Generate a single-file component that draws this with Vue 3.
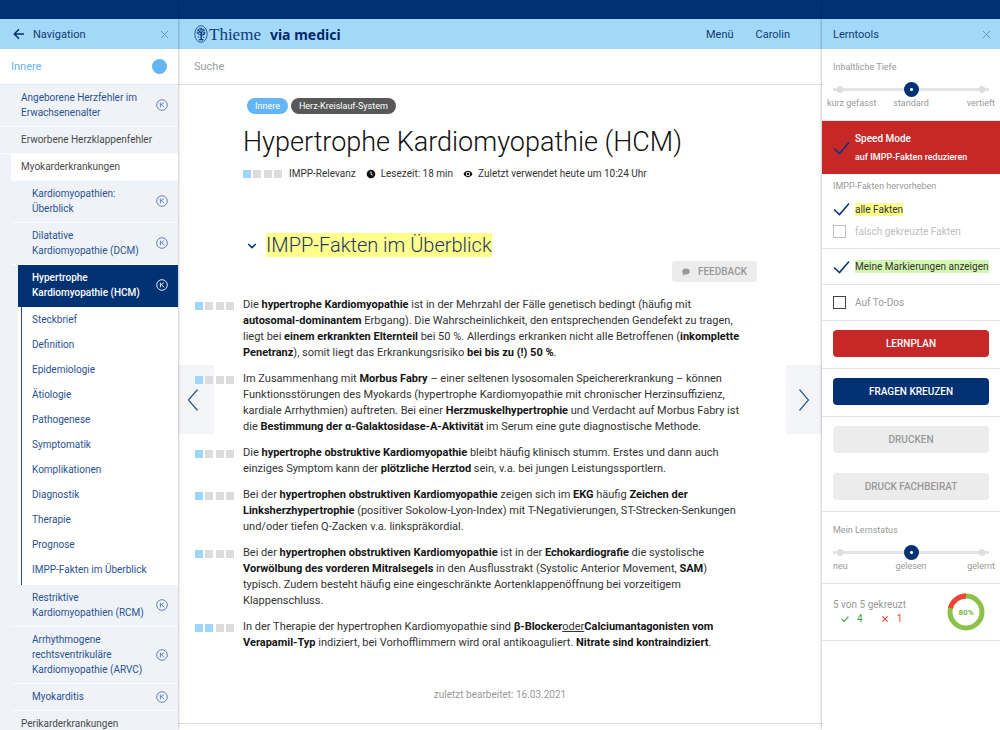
<script setup>
import { ref } from 'vue'

const before = [
  { lines: ['Angeborene Herzfehler im', 'Erwachsenenalter'], k: true },
  { lines: ['Erworbene Herzklappenfehler'], group: true },
]
const myocardTop = [
  ['Kardiomyopathien:', 'Überblick'],
  ['Dilatative', 'Kardiomyopathie (DCM)'],
]
const sections = [
  'Steckbrief', 'Definition', 'Epidemiologie', 'Ätiologie', 'Pathogenese', 'Symptomatik',
  'Komplikationen', 'Diagnostik', 'Therapie', 'Prognose', 'IMPP-Fakten im Überblick',
]
const myocardBottom = [
  ['Restriktive', 'Kardiomyopathien (RCM)'],
  ['Arrhythmogene', 'rechtsventrikuläre', 'Kardiomyopathie (ARVC)'],
  ['Myokarditis'],
]

// Each fact is a list of runs: b = bold, u = underlined link, br = line end.
const facts = [
  { level: 1, runs: [
    { t: 'Die ' }, { t: 'hypertrophe Kardiomyopathie', b: 1 }, { t: ' ist in der Mehrzahl der Fälle genetisch bedingt (häufig mit', br: 1 },
    { t: 'autosomal-dominantem', b: 1 }, { t: ' Erbgang). Die Wahrscheinlichkeit, den entsprechenden Gendefekt zu tragen,', br: 1 },
    { t: 'liegt bei ' }, { t: 'einem erkrankten Elternteil', b: 1 }, { t: ' bei 50 %. Allerdings erkranken nicht alle Betroffenen (' }, { t: 'inkomplette', b: 1, br: 1 },
    { t: 'Penetranz', b: 1 }, { t: '), somit liegt das Erkrankungsrisiko ' }, { t: 'bei bis zu (!) 50 %', b: 1 }, { t: '.' } ] },
  { level: 1, runs: [
    { t: 'Im Zusammenhang mit ' }, { t: 'Morbus Fabry', b: 1 }, { t: ' – einer seltenen lysosomalen Speichererkrankung – können', br: 1 },
    { t: 'Funktionsstörungen des Myokards (hypertrophe Kardiomyopathie mit chronischer Herzinsuffizienz,', br: 1 },
    { t: 'kardiale Arrhythmien) auftreten. Bei einer ' }, { t: 'Herzmuskelhypertrophie', b: 1 }, { t: ' und Verdacht auf Morbus Fabry ist', br: 1 },
    { t: 'die ' }, { t: 'Bestimmung der α-Galaktosidase-A-Aktivität', b: 1 }, { t: ' im Serum eine gute diagnostische Methode.' } ] },
  { level: 1, runs: [
    { t: 'Die ' }, { t: 'hypertrophe obstruktive Kardiomyopathie', b: 1 }, { t: ' bleibt häufig klinisch stumm. Erstes und dann auch', br: 1 },
    { t: 'einziges Symptom kann der ' }, { t: 'plötzliche Herztod', b: 1 }, { t: ' sein, v.a. bei jungen Leistungssportlern.' } ] },
  { level: 1, runs: [
    { t: 'Bei der ' }, { t: 'hypertrophen obstruktiven Kardiomyopathie', b: 1 }, { t: ' zeigen sich im ' }, { t: 'EKG', b: 1 }, { t: ' häufig ' }, { t: 'Zeichen der', b: 1, br: 1 },
    { t: 'Linksherzhypertrophie', b: 1 }, { t: ' (positiver Sokolow-Lyon-Index) mit T-Negativierungen, ST-Strecken-Senkungen', br: 1 },
    { t: 'und/oder tiefen Q-Zacken v.a. linkspräkordial.' } ] },
  { level: 1, runs: [
    { t: 'Bei der ' }, { t: 'hypertrophen obstruktiven Kardiomyopathie', b: 1 }, { t: ' ist in der ' }, { t: 'Echokardiografie', b: 1 }, { t: ' die systolische', br: 1 },
    { t: 'Vorwölbung des vorderen Mitralsegels', b: 1 }, { t: ' in den Ausflusstrakt (Systolic Anterior Movement, ' }, { t: 'SAM', b: 1 }, { t: ')', br: 1 },
    { t: 'typisch. Zudem besteht häufig eine eingeschränkte Aortenklappenöffnung bei vorzeitigem', br: 1 },
    { t: 'Klappenschluss.' } ] },
  { level: 2, runs: [
    { t: 'In der Therapie der hypertrophen Kardiomyopathie sind ' }, { t: 'β-Blocker', b: 1 }, { t: 'oder', u: 1 }, { t: 'Calciumantagonisten vom', b: 1, br: 1 },
    { t: 'Verapamil-Typ', b: 1 }, { t: ' indiziert, bei Vorhofflimmern wird oral antikoaguliert. ' }, { t: 'Nitrate sind kontraindiziert', b: 1 }, { t: '.' } ] },
]

const search = ref('')
const depth = ref(1)
const status = ref(1)
const speedMode = ref(true)
const allFacts = ref(true)
const wrongFacts = ref(false)
const marks = ref(true)
const todos = ref(false)
</script>

<template>
  <div class="page">
    <aside class="nav">
      <div class="stripe"></div>
      <div class="bar">
        <button class="plain" aria-label="Zurück">
          <svg width="12" height="12" viewBox="0 0 12 12"><path d="M11 6H1.5M6 1.3L1.3 6L6 10.7" fill="none" stroke="#0b2f66" stroke-width="1.5" /></svg>
        </button>
        <span class="bar-title">Navigation</span>
        <button class="plain" aria-label="Schließen">
          <svg width="9" height="9" viewBox="0 0 9 9"><path d="M1 1L8 8M8 1L1 8" stroke="#7395b5" stroke-width="1" /></svg>
        </button>
      </div>
      <div class="subject"><a href="#">Innere</a><i class="dot"></i></div>
      <nav class="tree">
        <a v-for="item in before" :key="item.lines[0]" href="#" class="item" :class="{ group: item.group }">
          <span><template v-for="(l, i) in item.lines" :key="l"><br v-if="i">{{ l }}</template></span>
          <svg v-if="item.k" class="k" viewBox="0 0 12 12"><circle cx="6" cy="6" r="5.3" /><path d="M4.4 3.6V8.4M7.9 3.6L4.6 6.3M5.6 5.5L8 8.4" /></svg>
        </a>
        <div class="nested">
          <a href="#" class="item group open"><span>Myokarderkrankungen</span></a>
          <a v-for="lines in myocardTop" :key="lines[0]" href="#" class="item sub">
            <span><template v-for="(l, i) in lines" :key="l"><br v-if="i">{{ l }}</template></span>
            <svg class="k" viewBox="0 0 12 12"><circle cx="6" cy="6" r="5.3" /><path d="M4.4 3.6V8.4M7.9 3.6L4.6 6.3M5.6 5.5L8 8.4" /></svg>
          </a>
          <a href="#" class="item current">
            <span>Hypertrophe<br>Kardiomyopathie (HCM)</span>
            <svg class="k" viewBox="0 0 12 12"><circle cx="6" cy="6" r="5.3" /><path d="M4.4 3.6V8.4M7.9 3.6L4.6 6.3M5.6 5.5L8 8.4" /></svg>
          </a>
          <div class="sections"><div class="rail">
            <a v-for="s in sections" :key="s" href="#">{{ s }}</a>
          </div></div>
          <a v-for="lines in myocardBottom" :key="lines[0]" href="#" class="item sub">
            <span><template v-for="(l, i) in lines" :key="l"><br v-if="i">{{ l }}</template></span>
            <svg class="k" viewBox="0 0 12 12"><circle cx="6" cy="6" r="5.3" /><path d="M4.4 3.6V8.4M7.9 3.6L4.6 6.3M5.6 5.5L8 8.4" /></svg>
          </a>
        </div>
        <a href="#" class="item group"><span>Perikarderkrankungen</span></a>
      </nav>
    </aside>

    <main class="main">
      <div class="stripe"></div>
      <header class="bar head">
        <a href="#" class="logo">
          <svg width="14" height="18" viewBox="0 0 14 18" fill="none" stroke="#0c3b7c">
            <ellipse cx="7" cy="9" rx="6.2" ry="8.3" stroke-width="0.8" />
            <path d="M7.2 7V14M5 15C6 14.2 8.4 14.2 9.4 15" stroke-width="1.5" />
            <path d="M7 9.5C4.8 9.6 3 8.6 3.1 6.6M7 10.5C9.5 10.2 11 8.9 10.8 6.8M7 7.5C5 7 4.3 5.6 4.8 3.8M7.2 7.5C9 7 9.8 5.4 9 3.8M7 6.5V2.8" stroke-width="1.1" />
            <path d="M3 5.2H4.6M5.4 3.2L6.4 4.8M9.9 5.2H11.2M7.8 3L8.2 5M4 8L5.6 7.4M8.6 8.3L10 7.6M3.8 12H5.4M9 12.3H10.3" stroke-width="1" />
          </svg>
          <span class="thieme">Thieme</span><span class="via">via medici</span>
        </a>
        <nav class="links"><a href="#">Menü</a><a href="#">Carolin</a></nav>
      </header>
      <div class="search"><input v-model="search" type="text" placeholder="Suche" aria-label="Suche"></div>

      <article class="content">
        <div class="tags"><a href="#" class="tag blue">Innere</a><a href="#" class="tag">Herz-Kreislauf-System</a></div>
        <h1>Hypertrophe Kardiomyopathie (HCM)</h1>
        <div class="meta">
          <span class="rel"><i v-for="n in 4" :key="n" :class="{ on: n <= 1 }"></i></span>
          <span>IMPP-Relevanz</span>
          <svg width="10" height="10" viewBox="0 0 10 10"><circle cx="5" cy="5" r="4.3" fill="#111" /><path d="M5 2.4V5.2L6.8 6.2" fill="none" stroke="#fff" stroke-width="0.9" /></svg>
          <span>Lesezeit: 18 min</span>
          <svg width="10" height="10" viewBox="0 0 10 10"><path d="M0.5 5C2.6 0.8 7.4 0.8 9.5 5C7.4 9.2 2.6 9.2 0.5 5Z" fill="#111" /><circle cx="5" cy="5" r="2.2" fill="#fff" /><circle cx="5" cy="5" r="1.3" fill="#111" /></svg>
          <span>Zuletzt verwendet heute um 10:24 Uhr</span>
        </div>
        <div class="section-head">
          <button class="plain" aria-label="Abschnitt einklappen">
            <svg width="10" height="8" viewBox="0 0 10 8"><path d="M1.2 3L5 6.6L8.8 3" fill="none" stroke="#0c3478" stroke-width="1.6" /></svg>
          </button>
          <h2><mark>IMPP-Fakten im Überblick</mark></h2>
        </div>
        <div class="feedback-row">
          <button class="feedback">
            <svg width="8" height="8" viewBox="0 0 8 8"><path d="M4 0.6C6.3 0.6 7.8 1.9 7.8 3.6S6.3 6.6 4 6.6C3.6 6.6 3.3 6.6 2.9 6.5C2.4 7.1 1.5 7.6 0.6 7.6C1 7.1 1.2 6.5 1.1 5.8C0.5 5.2 0.2 4.5 0.2 3.6C0.2 1.9 1.7 0.6 4 0.6Z" fill="#999" /></svg>
            FEEDBACK
          </button>
        </div>
        <div class="facts">
          <div v-for="(fact, i) in facts" :key="i" class="fact">
            <span class="rel"><i v-for="n in 4" :key="n" :class="{ on: n <= fact.level }"></i></span>
            <p><template v-for="(r, j) in fact.runs" :key="j"><b v-if="r.b">{{ r.t }}</b><u v-else-if="r.u">{{ r.t }}</u><template v-else>{{ r.t }}</template><br v-if="r.br"></template></p>
          </div>
        </div>
        <p class="edited">zuletzt bearbeitet: 16.03.2021</p>
      </article>

      <button class="pager prev" aria-label="Vorheriger Artikel">
        <svg width="12" height="24" viewBox="0 0 12 24"><path d="M10.5 1.5L1.5 12L10.5 22.5" fill="none" stroke="#2c5590" stroke-width="1.2" /></svg>
      </button>
      <button class="pager next" aria-label="Nächster Artikel">
        <svg width="12" height="24" viewBox="0 0 12 24"><path d="M1.5 1.5L10.5 12L1.5 22.5" fill="none" stroke="#2c5590" stroke-width="1.2" /></svg>
      </button>
    </main>

    <aside class="tools">
      <div class="stripe"></div>
      <div class="bar">
        <span class="bar-title">Lerntools</span>
        <button class="plain" aria-label="Schließen">
          <svg width="9" height="9" viewBox="0 0 9 9"><path d="M1 1L8 8M8 1L1 8" stroke="#7395b5" stroke-width="1" /></svg>
        </button>
      </div>
      <section class="slider">
        <label for="depth">Inhaltliche Tiefe</label>
        <input id="depth" v-model="depth" type="range" min="0" max="2">
        <div class="scale"><span>kurz gefasst</span><span>standard</span><span>vertieft</span></div>
      </section>
      <section class="speed">
        <label class="check">
          <span class="box"><input v-model="speedMode" type="checkbox"><svg v-if="speedMode" viewBox="0 0 17 14"><path d="M1 7.5L6.5 12.5L16 1.5" /></svg></span>
          <span><strong>Speed Mode</strong><small>auf IMPP-Fakten reduzieren</small></span>
        </label>
      </section>
      <section class="marks">
        <h3>IMPP-Fakten hervorheben</h3>
        <label class="check">
          <span class="box"><input v-model="allFacts" type="checkbox"><svg v-if="allFacts" viewBox="0 0 17 14"><path d="M1 7.5L6.5 12.5L16 1.5" /></svg></span>
          <mark>alle Fakten</mark>
        </label>
        <label class="check off">
          <span class="box"><input v-model="wrongFacts" type="checkbox"><svg v-if="wrongFacts" viewBox="0 0 17 14"><path d="M1 7.5L6.5 12.5L16 1.5" /></svg></span>
          <span>falsch gekreuzte Fakten</span>
        </label>
      </section>
      <section class="single">
        <label class="check">
          <span class="box"><input v-model="marks" type="checkbox"><svg v-if="marks" viewBox="0 0 17 14"><path d="M1 7.5L6.5 12.5L16 1.5" /></svg></span>
          <mark class="green">Meine Markierungen anzeigen</mark>
        </label>
      </section>
      <section class="single">
        <label class="check">
          <span class="box"><input v-model="todos" type="checkbox"><svg v-if="todos" viewBox="0 0 17 14"><path d="M1 7.5L6.5 12.5L16 1.5" /></svg></span>
          <span>Auf To-Dos</span>
        </label>
      </section>
      <section class="actions"><button class="btn red">LERNPLAN</button></section>
      <section class="actions"><button class="btn navy">FRAGEN KREUZEN</button></section>
      <section class="actions"><button class="btn">DRUCKEN</button><button class="btn">DRUCK FACHBEIRAT</button></section>
      <section class="slider">
        <label for="status">Mein Lernstatus</label>
        <input id="status" v-model="status" type="range" min="0" max="2">
        <div class="scale inset"><span>neu</span><span>gelesen</span><span>gelernt</span></div>
      </section>
      <section class="result">
        <div>
          <p>5 von 5 gekreuzt</p>
          <div class="counts">
            <span class="ok"><svg width="8" height="8" viewBox="0 0 8 8"><path d="M0.8 4.2L3 6.4L7.4 1.6" /></svg>4</span>
            <span class="bad"><svg width="8" height="8" viewBox="0 0 8 8"><path d="M1.4 1.4L6.6 6.6M6.6 1.4L1.4 6.6" /></svg>1</span>
          </div>
        </div>
        <svg class="donut" width="38" height="38" viewBox="0 0 38 38">
          <circle cx="19" cy="19" r="16" stroke="#8bc34a" />
          <circle cx="19" cy="19" r="16" stroke="#f44336" pathLength="100" stroke-dasharray="21 79" stroke-dashoffset="21" transform="rotate(-90 19 19)" />
          <text x="19" y="22" text-anchor="middle">80%</text>
        </svg>
      </section>
    </aside>
  </div>
</template>

<style>
html, body { background: #fff; }
</style>

<style scoped>
.page {
  display: grid;
  grid-template-columns: 178px minmax(0, 1fr) 178px;
  height: 100vh;
  overflow: hidden;
  font-family: Roboto, "Liberation Sans", sans-serif;
  font-size: 11px;
  line-height: 15px;
  color: #333;
}
.page *, .page *::before { box-sizing: border-box; }
a { color: inherit; text-decoration: none; }
p, h1, h2, h3 { margin: 0; font-weight: 400; }
button { font-family: inherit; cursor: pointer; }
svg { display: block; flex: none; }
.plain { display: flex; padding: 0; border: 0; background: none; }

.stripe { height: 19px; background: #003173; }
.bar {
  display: flex;
  align-items: center;
  height: 30px;
  padding: 0 13px;
  background: #a3d8f8;
  color: #0f3c74;
}
.bar-title { flex: 1; }

/* left navigation */
.nav, .tools { position: relative; z-index: 1; overflow: hidden; box-shadow: 0 0 3px rgba(0, 0, 0, 0.35); }
.nav { background: #eff3f8; }
.nav .bar { padding: 0 9px 0 13px; }
.nav .bar-title { padding-left: 8px; }
.subject {
  display: flex;
  align-items: center;
  justify-content: space-between;
  height: 36px;
  padding: 0 11px;
  border-bottom: 1px solid #e3e6ea;
  background: #fff;
  color: #64b5f6;
}
.dot { width: 15px; height: 15px; border-radius: 50%; background: #64b5f6; }
.tree { color: #2a5291; font-size: 10px; }
.item {
  display: flex;
  align-items: center;
  justify-content: space-between;
  padding: 5px 10px 6px 21px;
  border-bottom: 1px solid #fbfcfd;
  white-space: nowrap;
}
.group { color: #4a4a4a; }
.nested { padding-left: 11px; }
.nested .item { padding-left: 10px; }
.nested .sub { padding-left: 21px; }
.open { background: #fff; }
.nested .current {
  margin-left: 7px;
  padding-left: 14px;
  border-color: #003173;
  background: #003173;
  color: #fff;
  font-weight: 500;
}
.sections { margin-left: 7px; padding-left: 3px; background: #fff; }
.rail { padding: 0 0 3px 10px; border-left: 1px solid #2a5291; }
.rail a { display: block; line-height: 25px; white-space: nowrap; }
.k { width: 12px; height: 12px; fill: none; stroke: #5577a8; stroke-width: 0.9; }
.current .k { stroke: #fff; }

/* article column */
.main { position: relative; display: flex; flex-direction: column; }
.head { justify-content: space-between; padding: 0 32px 0 16px; }
.logo { display: flex; align-items: center; }
.thieme { padding-left: 1px; font-family: "Liberation Serif", serif; font-size: 17px; color: #0c3b7c; }
.via { padding-left: 9px; font-family: "Noto Sans", sans-serif; font-size: 14px; font-weight: 700; color: #04286b; }
.links { display: flex; gap: 22px; }
.search { display: flex; height: 36px; padding: 0 16px; border-bottom: 1px solid #dedede; }
.search input { flex: 1; padding: 0; border: 0; outline: 0; font: inherit; background: none; }
.search input::placeholder { color: #9b9b9b; opacity: 1; }
.content { flex: none; padding: 13px 65px 0; border-bottom: 1px solid #dedede; }
.tags { display: flex; gap: 3px; padding-left: 4px; }
.tag { height: 16px; padding: 0 8px; border-radius: 8px; background: #585858; color: #fff; font-size: 9px; line-height: 16px; }
.tag.blue { background: #64b5f6; }
h1 { padding-top: 11px; font-size: 27px; line-height: 34px; font-weight: 300; color: #111; }
.rel { display: flex; flex: none; justify-content: space-between; width: 39px; }
.rel i { width: 8px; height: 8px; background: #dcdcdc; }
.rel i.on { background: #9dd6fa; }
.meta { display: flex; align-items: center; padding-top: 7px; font-size: 10px; line-height: 15px; }
.meta span + svg { margin: 0 5px 0 10px; }
.meta .rel + span { padding-left: 7px; }
.section-head { display: flex; align-items: center; gap: 9px; padding: 52px 0 0 4px; }
h2 { font-size: 20px; line-height: 24px; font-weight: 300; color: #1c3765; }
h2 mark { display: block; }
mark { background: #ffff8c; color: inherit; }
.feedback-row { display: flex; justify-content: flex-end; padding-top: 4px; }
.feedback {
  display: flex;
  align-items: center;
  gap: 8px;
  height: 21px;
  padding: 0 10px;
  border: 0;
  border-radius: 3px;
  background: #ececec;
  color: #999;
  font-size: 10px;
  font-weight: 500;
}
.facts { display: grid; gap: 10px; padding-top: 15px; margin-left: -48px; }
.fact { display: flex; gap: 9px; font-size: 11px; line-height: 16px; white-space: nowrap; position: relative; z-index: 1; }
.fact .rel { padding-top: 5px; }
.fact b { font-weight: 700; color: #151515; }
.edited { padding: 36px 0 21px; text-align: center; font-size: 10px; color: #999; }
.pager {
  position: absolute;
  top: 50%;
  display: flex;
  align-items: center;
  justify-content: center;
  width: 36px;
  height: 69px;
  padding: 0;
  border: 0;
  background: #f3f5f8;
}
.prev { left: 0; padding-right: 7px; }
.next { right: 0; }

/* learning tools */
.tools { background: #fff; color: #999; font-size: 10px; }
.tools .bar { padding: 0 9px 0 11px; font-size: 11px; }
.tools section { border-bottom: 1px solid #e4e4e4; }
.slider { padding: 11px 11px 10px; line-height: 15px; }
.slider label { display: block; font-size: 9px; }
.slider input {
  display: block;
  width: 100%;
  height: 15px;
  margin: 7px 0 0;
  appearance: none;
  background:
    radial-gradient(circle at 7px 50%, #dedede 3px, transparent 4px),
    radial-gradient(circle at calc(100% - 7px) 50%, #dedede 3px, transparent 4px),
    linear-gradient(#e4e4e4, #e4e4e4) 0 50% / 100% 3px no-repeat;
}
.slider input::-webkit-slider-thumb {
  appearance: none;
  width: 15px;
  height: 15px;
  border-radius: 50%;
  background: radial-gradient(circle, #fff 1px, #003173 2px);
}
.scale { display: grid; grid-template-columns: 1fr 1fr 1fr; margin: 0 -6px; line-height: 13px; font-size: 9px; white-space: nowrap; }
.scale.inset { margin-left: 0; grid-template-columns: 50px 1fr 56px; }
.scale span:nth-child(2) { text-align: center; }
.scale span:nth-child(3) { text-align: right; }
.check { display: flex; align-items: center; gap: 5px; }
.box { display: grid; place-items: center start; width: 17px; height: 14px; flex: none; }
.box input { grid-area: 1 / 1; width: 13px; height: 13px; margin: 0; border: 1px solid #444; appearance: none; }
.box input:checked { border-color: transparent; }
.box svg { grid-area: 1 / 1; width: 17px; height: 14px; fill: none; stroke: #0c3478; stroke-width: 1.6; pointer-events: none; }
.off { color: #c0c0c0; }
.off .box input { border-color: #c0c0c0; }
.tools .speed { padding: 9px 11px 8px; border: 0; background: #c62828; color: #fff; }
.speed strong, .speed small { display: block; font-weight: 500; line-height: 18px; }
.speed strong { font-size: 10px; }
.speed small { font-size: 9px; }
.marks { padding: 5px 11px 6px; }
.marks h3 { font-size: 9px; line-height: 15px; }
.marks .check { height: 22px; margin-top: 4px; }
.marks .check + .check { margin-top: 0; }
.check mark { color: #333; line-height: 13px; white-space: nowrap; }
.check mark.green { background: #d4f7b0; }
.single { padding: 9px 11px; }
.single .check { height: 17px; }
.actions { display: grid; gap: 20px; padding: 9px 11px 11px; }
.btn { height: 27px; padding: 0; border: 0; border-radius: 4px; background: #ececec; color: #999; font-size: 10px; font-weight: 500; }
.btn.red { background: #c62828; color: #fff; }
.btn.navy { background: #003173; color: #fff; }
.result { display: flex; align-items: center; justify-content: space-between; padding: 9px 15px 9px 11px; }
.result p { line-height: 14px; }
.counts { display: flex; gap: 18px; padding-left: 8px; line-height: 14px; }
.counts span { display: flex; align-items: center; gap: 8px; }
.counts svg { fill: none; stroke: currentColor; stroke-width: 1.2; }
.ok { color: #43a047; }
.bad { color: #f44336; }
.donut circle { fill: none; stroke-width: 5; }
.donut text { fill: #7cb342; font-size: 8px; font-weight: 700; }
</style>
